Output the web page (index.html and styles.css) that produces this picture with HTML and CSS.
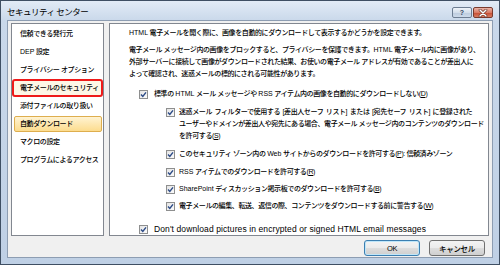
FILE: index.html
```html
<!DOCTYPE html>
<html lang="ja">
<head>
  <meta charset="UTF-8" />
  <title>セキュリティ センター</title>
  <link rel="stylesheet" href="styles.css">
</head>
<body>
  <div class="window">
    <!-- Title bar -->
    <div class="titlebar">
      <span class="title">セキュリティ センター</span>
      <div class="caption-buttons">
        <span class="cap-btn help">?</span>
        <span class="cap-btn close">
          <svg width="10" height="8" viewBox="0 0 10 8"><path d="M2 1 L8 7 M8 1 L2 7" stroke="#5a2418" stroke-width="2.6" stroke-linecap="round"/><path d="M2 1 L8 7 M8 1 L2 7" stroke="#fff" stroke-width="1.5" stroke-linecap="round"/></svg>
        </span>
      </div>
    </div>

    <!-- Dialog face -->
    <div class="face">
      <div class="panels">
        <ul class="nav">
          <li>信頼できる発行元</li>
          <li><span class="en">DEP</span> 設定</li>
          <li>プライバシー オプション</li>
          <li class="marked">電子メールのセキュリティ</li>
          <li>添付ファイルの取り扱い</li>
          <li class="selected">自動ダウンロード</li>
          <li>マクロの設定</li>
          <li>プログラムによるアクセス</li>
        </ul>

        <div class="content">
          <p class="intro"><span class="en">HTML</span> 電子メールを開く際に、画像を自動的にダウンロードして表示するかどうかを設定できます。</p>
          <p class="note">電子メール メッセージ内の画像をブロックすると、プライバシーを保護できます。<span class="en">HTML</span> 電子メール内に画像があり、<br>外部サーバーに接続して画像がダウンロードされた結果、お使いの電子メール アドレスが有効であることが差出人に<br>よって確認され、迷惑メールの標的にされる可能性があります。</p>

          <div class="check main">
            <span class="box"><svg width="7" height="7" viewBox="0 0 7 7"><path d="M1 3.6 L2.8 5.5 L6 1.3" fill="none" stroke="#2b4a86" stroke-width="1.4"/></svg></span>
            <span class="label">標準の <span class="en">HTML</span> メール メッセージや <span class="en">RSS</span> アイテム内の画像を自動的にダウンロードしない(<u>D</u>)</span>
          </div>

          <div class="sub">
            <div class="check first">
              <span class="box"><svg width="7" height="7" viewBox="0 0 7 7"><path d="M1 3.6 L2.8 5.5 L6 1.3" fill="none" stroke="#2b4a86" stroke-width="1.4"/></svg></span>
              <span class="label"><span class="spaced">迷惑メール フィルターで使用する [差出人セーフ リスト] または [宛先セーフ リスト] に登録された</span><br>ユーザーやドメインが差出人や宛先にある場合、電子メール メッセージ内のコンテンツのダウンロード<br>を許可する(<u>S</u>)</span>
            </div>
            <div class="check">
              <span class="box"><svg width="7" height="7" viewBox="0 0 7 7"><path d="M1 3.6 L2.8 5.5 L6 1.3" fill="none" stroke="#2b4a86" stroke-width="1.4"/></svg></span>
              <span class="label">このセキュリティ ゾーン内の <span class="en">Web</span> サイトからのダウンロードを許可する(<u>P</u>): 信頼済みゾーン</span>
            </div>
            <div class="check">
              <span class="box"><svg width="7" height="7" viewBox="0 0 7 7"><path d="M1 3.6 L2.8 5.5 L6 1.3" fill="none" stroke="#2b4a86" stroke-width="1.4"/></svg></span>
              <span class="label"><span class="en">RSS</span> アイテムでのダウンロードを許可する(<u>R</u>)</span>
            </div>
            <div class="check tight">
              <span class="box"><svg width="7" height="7" viewBox="0 0 7 7"><path d="M1 3.6 L2.8 5.5 L6 1.3" fill="none" stroke="#2b4a86" stroke-width="1.4"/></svg></span>
              <span class="label"><span class="en">SharePoint</span> ディスカッション掲示板でのダウンロードを許可する(<u>B</u>)</span>
            </div>
            <div class="check tight">
              <span class="box"><svg width="7" height="7" viewBox="0 0 7 7"><path d="M1 3.6 L2.8 5.5 L6 1.3" fill="none" stroke="#2b4a86" stroke-width="1.4"/></svg></span>
              <span class="label">電子メールの編集、転送、返信の際、コンテンツをダウンロードする前に警告する(<u>W</u>)</span>
            </div>
          </div>

          <div class="check main last">
            <span class="box"><svg width="7" height="7" viewBox="0 0 7 7"><path d="M1 3.6 L2.8 5.5 L6 1.3" fill="none" stroke="#2b4a86" stroke-width="1.4"/></svg></span>
            <span class="label latin">Don't download pictures in encrypted or signed HTML email messages</span>
          </div>
        </div>
      </div>

      <div class="buttons">
        <button class="btn default">OK</button>
        <button class="btn">キャンセル</button>
      </div>
    </div>
  </div>
</body>
</html>
```

FILE: styles.css
```css
* { margin: 0; padding: 0; box-sizing: border-box; }
html, body { width: 100%; height: 100%; background: #fff; overflow: hidden; }
body {
  font-family: "Liberation Sans", "Noto Sans CJK JP", sans-serif;
  font-size: 7px;
  font-weight: 500;
  letter-spacing: -0.4px;
  color: #000;
}
.en { letter-spacing: 0; }

.window {
  width: 500px;
  height: 265px;
  border: 1px solid #3f4f63;
  background: linear-gradient(#e2ebf6, #c9d8ea 20px, #bfd0e5);
  display: flex;
  flex-direction: column;
}

/* title bar */
.titlebar { height: 19px; display: flex; align-items: flex-start; padding-left: 6px; }
.title { flex: 1; font-size: 8.5px; font-weight: 400; letter-spacing: -0.5px; line-height: 10px; margin-top: 6px; }
.caption-buttons { display: flex; gap: 1px; margin: 6px 6px 0 0; }
.cap-btn {
  width: 20px;
  height: 11px;
  border: 1px solid #6d7d92;
  border-radius: 2px;
  display: flex;
  align-items: center;
  justify-content: center;
}
.help {
  background: linear-gradient(#eef3f9, #d3deeb 50%, #bccbdd 51%, #cddaea);
  color: #34465f;
  font-weight: bold;
  font-size: 7px;
  letter-spacing: 0;
  line-height: 9px;
}
.close {
  background: linear-gradient(#eab3a6, #d97a64 50%, #c54a2f 51%, #d67c62);
  border-color: #793a2c;
}

/* dialog face */
.face {
  flex: 1;
  margin: 0 6px 6px;
  background: #f0f0f0;
  border: 1px solid #8d9db2;
  padding: 2px 3px 1px;
  display: flex;
  flex-direction: column;
}
.panels { height: 213px; display: flex; gap: 5px; }

.nav {
  width: 93px;
  background: #fff;
  border: 1px solid #828790;
  list-style: none;
  padding-top: 1px;
}
.nav li { height: 18px; line-height: 18px; padding-left: 8px; white-space: nowrap; }
.nav li.marked {
  border: 2px solid #ee1a1a;
  border-radius: 3px;
  background: #fdf6e6;
  line-height: 14px;
  padding-left: 6px;
}
.nav li.selected {
  height: 16px;
  margin: 1px 1px 1px 2px;
  border: 1px solid #deae4e;
  border-radius: 2px;
  background: linear-gradient(#fff3d2, #fcdc8e);
  line-height: 14px;
  padding-left: 5px;
}

.content {
  flex: 1;
  background: #fff;
  border: 1px solid #828790;
  padding: 3px 0 0 19px;
  line-height: 12px;
  white-space: nowrap;
}
.note { margin-top: 5px; }

.check { display: flex; align-items: flex-start; gap: 6px; }
.check.main { margin: 8px 0 0 10px; }
.check.last { margin-top: 11px; }
.sub { margin-left: 37px; }
.sub .check { margin-top: 6px; gap: 4px; }
.sub .check.first { margin-top: 6px; }
.sub .check.tight { margin-top: 5px; }
.spaced { word-spacing: 1px; }

.box {
  flex: none;
  width: 9px;
  height: 9px;
  margin-top: 2px;
  border: 1px solid #8e8f8f;
  background: linear-gradient(135deg, #e4e4e4, #fbfbfb);
  display: flex;
  align-items: center;
  justify-content: center;
}
.label u { text-underline-offset: 1px; }
.latin { font-size: 8.5px; font-weight: 400; letter-spacing: 0.1px; }

/* bottom buttons */
.buttons { display: flex; justify-content: flex-end; gap: 9px; margin-top: 4px; padding-right: 4px; }
.btn {
  width: 56px;
  height: 16px;
  font-family: "Liberation Sans", "Noto Sans CJK JP", sans-serif;
  font-size: 7.5px;
  font-weight: 500;
  letter-spacing: -0.3px;
  color: #000;
  border: 1px solid #707070;
  border-radius: 3px;
  background: linear-gradient(#f3f3f3, #ebebeb 50%, #dddddd 51%, #cfcfcf);
}
.btn.default {
  border-color: #3c7fb1;
  box-shadow: inset 0 0 0 1px #bfe6f9;
}
```
